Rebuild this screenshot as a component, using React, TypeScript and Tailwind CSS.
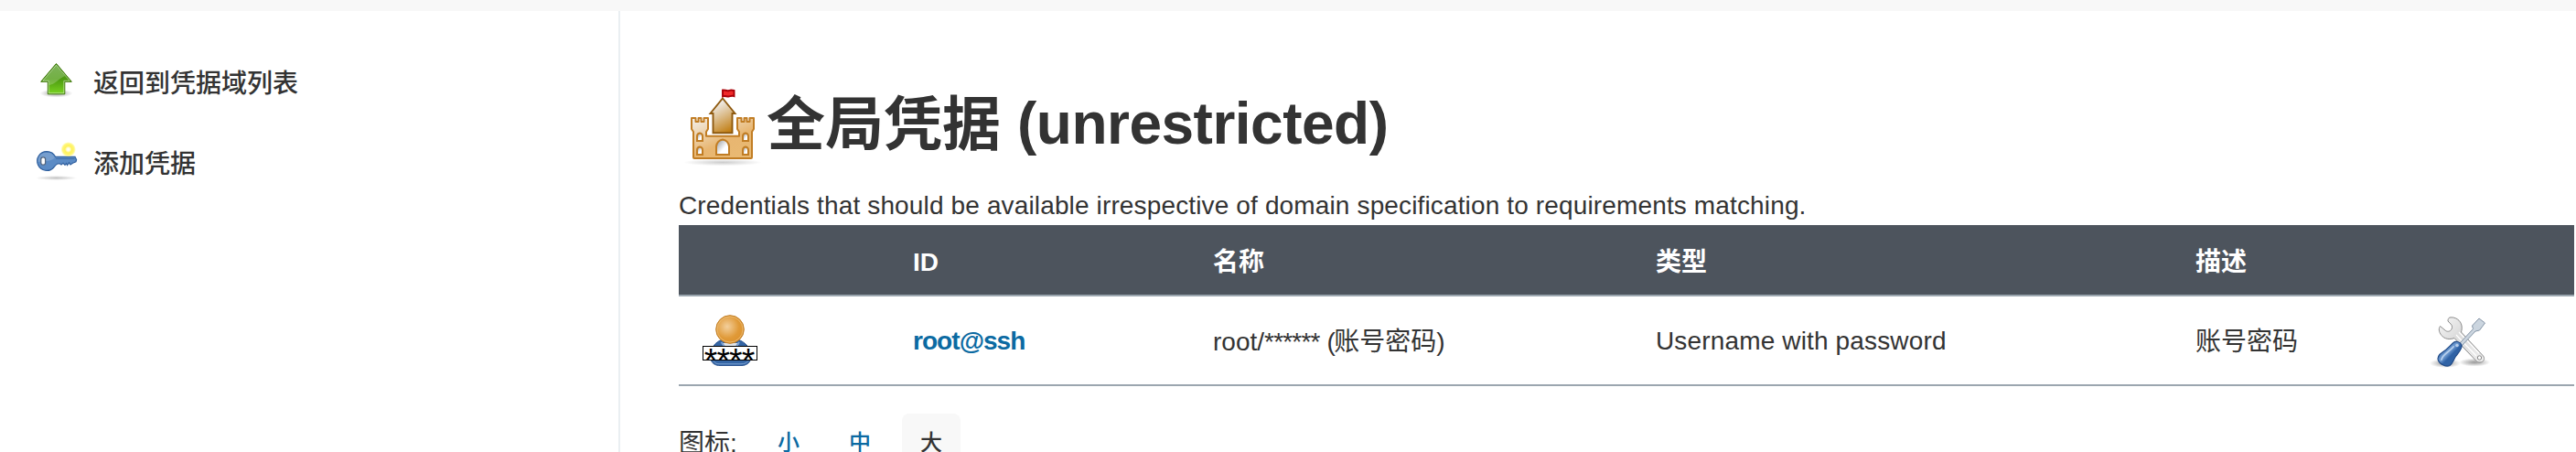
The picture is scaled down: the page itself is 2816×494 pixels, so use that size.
import type { ReactNode } from 'react'
import { clsx } from 'clsx'

const columns = [
  { key: 'icon', title: '', className: 'w-[256px]' },
  { key: 'id', title: 'ID', className: 'w-[328px]' },
  { key: 'name', title: '名称', className: 'w-[484px]' },
  { key: 'type', title: '类型', className: 'w-[590px]' },
  { key: 'desc', title: '描述', className: 'flex-1' },
]

function UpArrowIcon() {
  return (
    <svg viewBox="0 0 48 48" className="size-12 shrink-0">
      <defs>
        <linearGradient id="up-fill" x1="0" y1="0" x2="0" y2="1">
          <stop offset="0" stopColor="#5aa02c" />
          <stop offset="0.5" stopColor="#4c9a10" />
          <stop offset="1" stopColor="#79d321" />
        </linearGradient>
        <radialGradient id="shade">
          <stop offset="0" stopColor="#000" stopOpacity="0.4" />
          <stop offset="1" stopColor="#000" stopOpacity="0" />
        </radialGradient>
      </defs>
      <ellipse cx="23.5" cy="38" rx="18" ry="4.5" fill="url(#shade)" />
      <path d="M23.5 5.5 40.3 25.3H32.8V38.8H14.3V25.3H6.7Z" fill="url(#up-fill)" stroke="#3a7304" />
      <path d="M23.5 7.2 38.2 24.3H31.8V37.8H15.3V24.3H8.8Z" fill="none" stroke="#fff" strokeOpacity="0.45" />
      <path d="M23.5 7.2 8.8 24.3H15.3V29C22 28.5 26 22 33 19Z" fill="#fff" fillOpacity="0.22" />
    </svg>
  )
}

function NewKeyIcon() {
  return (
    <svg viewBox="0 0 48 48" className="size-12 shrink-0">
      <defs>
        <radialGradient id="glow">
          <stop offset="0" stopColor="#fff" />
          <stop offset="0.2" stopColor="#fffde0" />
          <stop offset="0.45" stopColor="#fff25a" />
          <stop offset="0.75" stopColor="#fff67a" />
          <stop offset="1" stopColor="#fff67a" stopOpacity="0" />
        </radialGradient>
      </defs>
      <ellipse cx="23.5" cy="42.5" rx="23" ry="2.6" fill="url(#shade)" opacity="0.6" />
      <path
        d="M13 13.6A10.4 10.4 0 1 0 20.8 31C22 29.5 23 27.8 25 27L27 26.6 29 28 31 26.4 33 28.3 34.5 26.6 35.5 28.6 37.5 25.8 39 28 41.5 26.3 45 24.8 45.6 22.5 44 19.3H22.5C20.8 15.6 17 13.6 13 13.6Z"
        fill="#5b8bc5"
        stroke="#2f5f9e"
        strokeWidth="1.2"
      />
      <path d="M3.5 25C3 18 7.5 14.6 13 14.6 17.5 14.6 20.5 17.5 22 20.5 17 25 9 24 3.5 25Z" fill="#fff" fillOpacity="0.17" />
      <path d="M23 21.5H43.5" stroke="#3f6ca8" />
      <rect x="6.8" y="19.8" width="4.8" height="8.4" rx="2.2" fill="#fff" stroke="#52647c" strokeWidth="1.2" />
      <circle cx="36.7" cy="11.3" r="8.3" fill="url(#glow)" />
    </svg>
  )
}

function CastleIcon() {
  return (
    <svg viewBox="2 0 96 104" className="h-[104px] w-24 shrink-0">
      <defs>
        <linearGradient id="wall" x1="0" y1="0" x2="0.7" y2="1">
          <stop offset="0" stopColor="#f3f1ee" />
          <stop offset="0.65" stopColor="#e8b671" />
          <stop offset="1" stopColor="#e9b972" />
        </linearGradient>
        <linearGradient id="keep" x1="0.3" y1="0" x2="0.7" y2="1">
          <stop offset="0.1" stopColor="#f0efee" />
          <stop offset="1" stopColor="#c17d11" />
        </linearGradient>
        <linearGradient id="hole" x1="0" y1="0" x2="1" y2="1">
          <stop offset="0.1" stopColor="#a0a4a8" />
          <stop offset="0.6" stopColor="#fff" />
        </linearGradient>
      </defs>
      <ellipse cx="50" cy="97.5" rx="43" ry="3.8" fill="url(#shade)" opacity="0.5" />
      <path
        d="M16 49V61L18 64V92Q18 93 19 93H81Q82 93 82 92V64L84 61V49H79.5V53H76.5V49H73.5V53H70.5V49H66V61L68 64V68.8H32V64L34 61V49H29.5V53H26.5V49H23.5V53H20.5V49Z"
        fill="url(#wall)"
        stroke="#c17d24"
        strokeWidth="2"
        strokeLinejoin="round"
      />
      <path d="M50 27.5 63.5 44H60.5V65.3H39.5V44H36.5Z" fill="url(#keep)" stroke="#8f5a10" strokeWidth="1.9" />
      <path d="M50 18.5C52 17.7 54.5 20 57 19 59 18 61 18.5 62.5 19V25C60 24 58 25.5 56.5 25.5 54 25.5 52 24.5 50 25.3Z" fill="#ef2929" stroke="#a90008" strokeWidth="1.9" />
      <g fill="url(#hole)" stroke="#c17d24" strokeWidth="2">
        <path d="M22 74V69Q22 66 25 65.5 28 66 28 69V74Z" />
        <path d="M22 89V84Q22 81 25 80.5 28 81 28 84V89Z" />
        <path d="M72 74V69Q72 66 75 65.5 78 66 78 69V74Z" />
        <path d="M72 89V84Q72 81 75 80.5 78 81 78 84V89Z" />
        <path d="M43 89V80Q44 73.5 50 72.5 56 73.5 57 80V89Z" />
      </g>
    </svg>
  )
}

function UserPasswordIcon() {
  return (
    <svg viewBox="4 0 68 75" className="h-[75px] w-[68px]">
      <defs>
        <radialGradient id="face" cx="0.4" cy="0.4" r="0.6">
          <stop offset="0" stopColor="#f3cf9c" />
          <stop offset="0.7" stopColor="#e09a38" />
          <stop offset="1" stopColor="#dd9330" />
        </radialGradient>
      </defs>
      <path d="M38 35C26 35 20 41 17.5 48V59C19 63 23 64.5 27 64.5H51C55 64.5 59 62 60 59V48C57 41 50 35 38 35Z" fill="#3465a4" stroke="#2a5390" />
      <path d="M20 59.5C22 62.5 24 62.8 27 62.8H50C54 62.8 56.5 61.5 58 59.5" fill="none" stroke="#7ba0d2" />
      <path d="M29 40 33 50H43L48 40Z" fill="#dfe4ea" />
      <path d="M28.5 39 33 45 31 49M48 39 44 45 46 49" fill="none" stroke="#7ba0d2" strokeWidth="2" />
      <circle cx="38" cy="25" r="15.3" fill="url(#face)" stroke="#c17d24" />
      <circle cx="38" cy="25" r="14" fill="none" stroke="#eec07c" strokeOpacity="0.8" />
      <rect x="8.5" y="43.5" width="59" height="15" fill="#fff" stroke="#000" />
      <text x="8.3 22 35.6 49.3" y="71.5" className="font-['Liberation_Sans'] text-[37px] italic" fill="#000">
        ****
      </text>
    </svg>
  )
}

function ToolsIcon() {
  return (
    <svg viewBox="0 0 80 75" className="h-[75px] w-20">
      <defs>
        <linearGradient id="steel" x1="0" y1="0" x2="1" y2="1">
          <stop offset="0" stopColor="#f7f7f7" />
          <stop offset="0.4" stopColor="#dcdcdc" />
          <stop offset="1" stopColor="#eeeeee" />
        </linearGradient>
        <linearGradient id="grip" x1="0.2" y1="0.2" x2="0.8" y2="0.8">
          <stop offset="0" stopColor="#3f72b5" />
          <stop offset="0.4" stopColor="#6f9bd1" />
          <stop offset="0.6" stopColor="#2f62a6" />
          <stop offset="1" stopColor="#3465a4" />
        </linearGradient>
      </defs>
      <ellipse cx="23" cy="62" rx="17" ry="5" fill="url(#shade)" />
      <ellipse cx="55" cy="61" rx="17" ry="4.5" fill="url(#shade)" />
      <path
        d="M28 12C34 11 40 15 41 21 41.5 24 41 26 40.5 28L64.5 54C67 57 65 61 61 61 59 61 57.5 60 56.5 59L33 34.5C28 36.5 22 35.5 19 31.5 16 28 15.5 24 17.5 21.5L23 26C25 28 28 27.5 29.5 25.5 31 23.5 31 21 29 19L26 16C26 14 26.5 12.5 28 12Z"
        fill="url(#steel)"
        stroke="#8c8c8c"
        strokeLinejoin="round"
      />
      <path d="M35 31 57 54M38 28 60 51" fill="none" stroke="#fff" strokeWidth="1.2" />
      <circle cx="60.5" cy="56" r="2.2" fill="#fff" stroke="#888" />
      <path d="M39 40 53.5 24.5 52.5 21 60 13 66.5 18 60.5 26 56 27 41.5 42.5Z" fill="#cbd5df" stroke="#8494a6" strokeLinejoin="round" />
      <path d="M32 39.5C35 37 40 39 41 42.5 42 46 37 51 34.5 54.5 32 58.5 31 62.5 28 64.5 24 66.5 17 63 15.5 59 14.5 56 16 52.5 20 50 25 47 28 43 32 39.5Z" fill="url(#grip)" stroke="#204a87" strokeWidth="1.2" />
      <path d="M19 58C20 52 27 50 32 44" fill="none" stroke="#b7cfec" strokeWidth="1.8" strokeLinecap="round" />
      <circle cx="36" cy="42.5" r="1.8" fill="#b7cfec" />
    </svg>
  )
}

function TaskLink({ icon, children }: { icon: ReactNode; children: ReactNode }) {
  return (
    <a className="flex h-[88px] items-center gap-4 pl-[38px] text-[28px] font-medium">
      {icon}
      <span className="pt-[7px]">{children}</span>
    </a>
  )
}

function SizeButton({ label, active }: { label: string; active?: boolean }) {
  return (
    <button
      className={clsx(
        'flex h-16 w-16 items-center justify-center rounded-lg text-[24px] font-medium',
        active ? 'bg-[#f8f8f8] text-[#333]' : 'text-[#0b6aa2]',
      )}
    >
      {label}
    </button>
  )
}

export default function App() {
  return (
    <div lang="zh-CN" className="flex h-[494px] w-[2816px] flex-col overflow-hidden bg-white font-['Liberation_Sans','Noto_Sans_CJK_SC',sans-serif] text-[28px] leading-[40px] text-[#333]">
      <div className="h-3 shrink-0 bg-[#f8f8f8]" />
      <div className="flex min-h-0 flex-1">
        <aside className="w-[678px] shrink-0 border-r-2 border-[#eaeff2] pt-8">
          <TaskLink icon={<UpArrowIcon />}>返回到凭据域列表</TaskLink>
          <TaskLink icon={<NewKeyIcon />}>添加凭据</TaskLink>
        </aside>

        <main className="flex w-[2138px] flex-col pr-0.5 pl-16 whitespace-nowrap">
          <h1 className="mt-[68px] flex h-[104px] shrink-0 items-center text-[64px] leading-[104px] font-bold">
            <CastleIcon />
            <span className="pt-[7px]">全局凭据</span>
            <span className="ml-[18px] pt-[5px] tracking-[-0.5px]">(unrestricted)</span>
          </h1>
          <p className="mt-[21px] h-[41px] shrink-0 tracking-[0.14px]">
            Credentials that should be available irrespective of domain specification to requirements matching.
          </p>

          <div className="flex h-[78px] shrink-0 items-center border-b-2 border-[#9ba6af] bg-[#4d545d] pt-[5px] font-bold text-white">
            {columns.map((c) => (
              <div key={c.key} className={c.className}>
                {c.title}
              </div>
            ))}
          </div>
          <div className="flex h-[98px] shrink-0 items-center border-b-2 border-[#9ba6af]">
            <div className="w-[256px] pl-[22px]">
              <UserPasswordIcon />
            </div>
            <div className="w-[328px] pt-0.5 font-bold tracking-[-0.95px] text-[#0b6aa2]">root@ssh</div>
            <div className="w-[484px] pt-[3px]">
              root/<span className="tracking-[-0.8px]">******</span> <span className="tracking-[-1.5px]">(</span>账号密码)
            </div>
            <div className="w-[590px] pt-0.5 tracking-[0.15px]">Username with password</div>
            <div className="w-[250px] pt-[3px]">账号密码</div>
            <ToolsIcon />
          </div>

          <div className="mt-[30px] flex h-16 shrink-0 items-center">
            <span className="w-[88px] pt-0.5 text-[28px]">图标:</span>
            <div className="flex gap-[14px]">
              <SizeButton label="小" />
              <SizeButton label="中" />
              <SizeButton label="大" active />
            </div>
          </div>
        </main>
      </div>
    </div>
  )
}
